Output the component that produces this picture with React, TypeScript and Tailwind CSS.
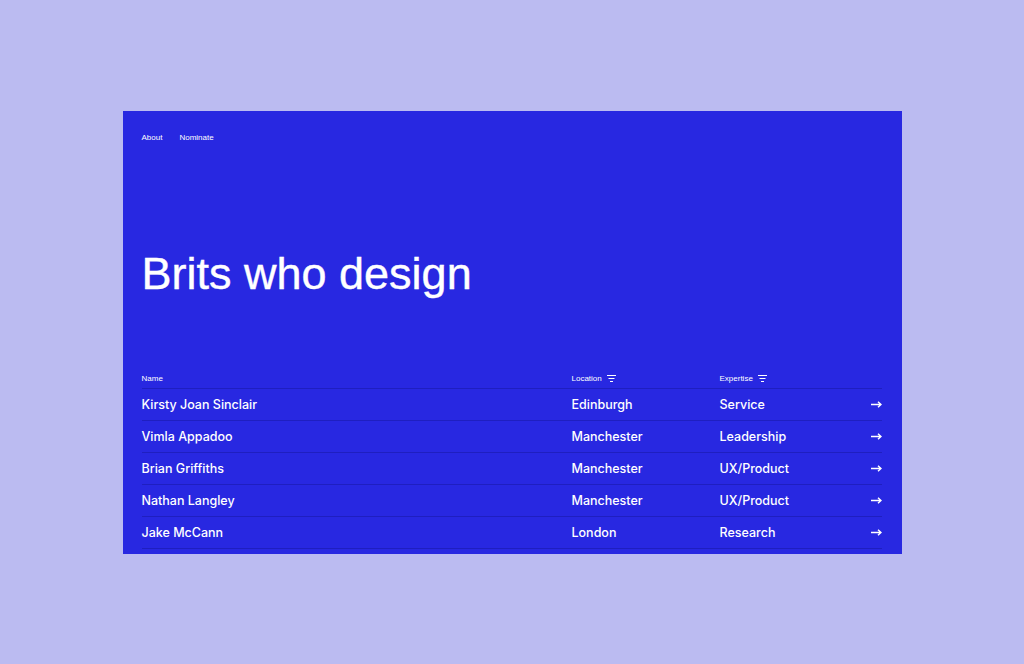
import React from 'react'

const people = [
  { name: 'Kirsty Joan Sinclair', location: 'Edinburgh', expertise: 'Service' },
  { name: 'Vimla Appadoo', location: 'Manchester', expertise: 'Leadership' },
  { name: 'Brian Griffiths', location: 'Manchester', expertise: 'UX/Product' },
  { name: 'Nathan Langley', location: 'Manchester', expertise: 'UX/Product' },
  { name: 'Jake McCann', location: 'London', expertise: 'Research' },
]

function FilterIcon() {
  return (
    <svg width="9" height="7" viewBox="0 0 9 7" fill="none" stroke="currentColor" strokeWidth={1}>
      <path d="M0 0.5h9M1.5 3.5h6M3 6.5h3" />
    </svg>
  )
}

function Arrow() {
  return (
    <svg width="11" height="7" viewBox="0 0 11 7" fill="none" stroke="currentColor" strokeWidth={1.4}>
      <path d="M0 3.5h10M7 0.7l3 2.8-3 2.8" />
    </svg>
  )
}

export default function App() {
  return (
    <div className="w-full h-screen bg-[#bbbbf1] flex items-center justify-center font-['Liberation_Sans',Arial,sans-serif]">
      <div className="w-[779px] h-[443px] bg-[#2828e1] text-white flex flex-col px-[19px] pt-[22px] pb-[5px]">
        {/* Nav */}
        <nav className="flex gap-[17px] text-[8px] leading-[10px]">
          <a>About</a>
          <a>Nominate</a>
        </nav>

        {/* Title */}
        <h1 className="mt-[108px] text-[45px] leading-[45px] [-webkit-text-stroke:0.4px_white]">
          Brits who design
        </h1>

        {/* Table */}
        <div className="mt-auto mr-px">
          <div className="grid grid-cols-[430px_148px_1fr_auto] items-end h-[20px] pb-[5px] text-[8px] leading-[9px] border-b border-[#1f1fc0]">
            <span>Name</span>
            <span className="flex items-center gap-[5px]">Location <FilterIcon /></span>
            <span className="flex items-center gap-[5px]">Expertise <FilterIcon /></span>
            <span />
          </div>
          {people.map((p) => (
            <div
              key={p.name}
              className="grid grid-cols-[430px_148px_1fr_auto] items-center h-[32px] text-[12.5px] font-medium font-['Inter',sans-serif] border-b border-[#1f1fc0]"
            >
              <span className="pt-[2px]">{p.name}</span>
              <span className="pt-[2px]">{p.location}</span>
              <span className="pt-[2px]">{p.expertise}</span>
              <Arrow />
            </div>
          ))}
        </div>
      </div>
    </div>
  )
}
